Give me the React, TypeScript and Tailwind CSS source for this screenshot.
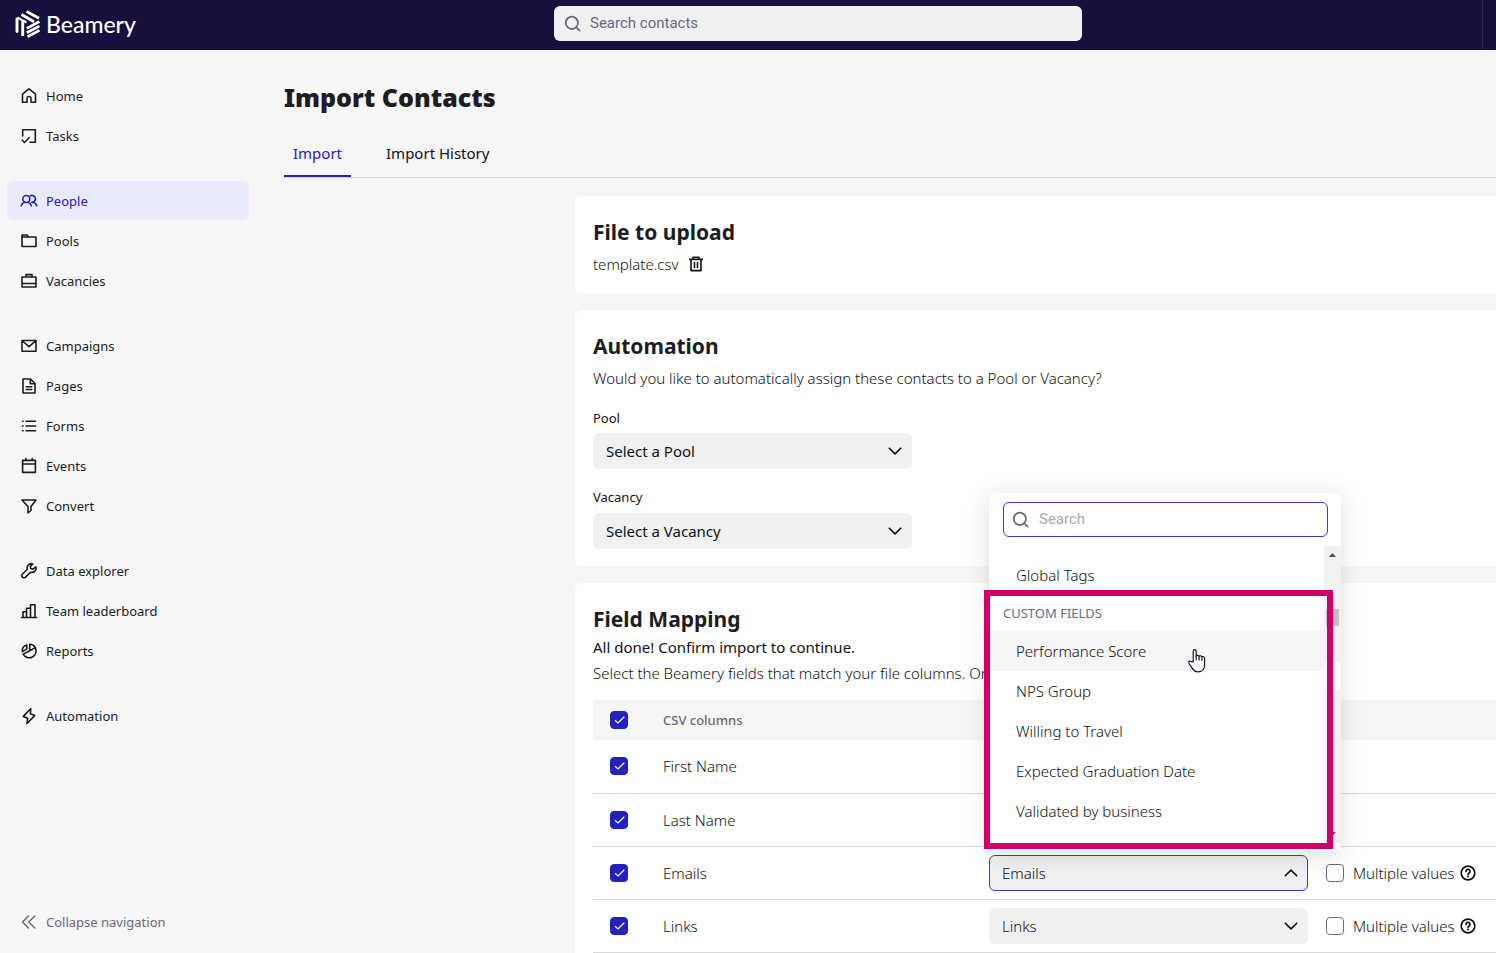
import React from "react";

type IconProps = { children: React.ReactNode };

function Icon({ children }: IconProps) {
  return (
    <svg
      viewBox="0 0 18 18"
      className="size-[18px] shrink-0"
      fill="none"
      stroke="currentColor"
      strokeWidth="1.6"
      strokeLinejoin="round"
      strokeLinecap="round"
      aria-hidden="true"
    >
      {children}
    </svg>
  );
}

type NavItem = { label: string; icon: React.ReactNode; active?: boolean };

const groups: NavItem[][] = [
  [
    {
      label: "Home",
      icon: <path d="M2.500 7.200 9 1.900l6.500 5.300v8H11v-3.700a2 2 0 0 0-4 0v3.700H2.500z" />,
    },
    {
      label: "Tasks",
      icon: <path d="M2.700 9V2.700h12.600v12.600H10M2.200 13.200l2.300 2.300 4.700-5" />,
    },
  ],
  [
    {
      label: "People",
      active: true,
      icon: (
        <>
          <circle cx="6.300" cy="7" r="3.500" />
          <path d="M1.200 13.800c.6-2.200 2-3.200 3.400-3.600M11.400 13.800c-.6-2.200-2-3.200-3.400-3.600M10.300 3.800a3.500 3.500 0 1 1 1.500 6.600M13.400 10.200c1.700.5 2.800 1.600 3.400 3.600" />
        </>
      ),
    },
    {
      label: "Pools",
      icon: <path d="M2 14.500V3h5l1.600 2H16v9.500zM2 5h6.600" />,
    },
    {
      label: "Vacancies",
      icon: <path d="M2 5h14v10H2zM6 5V2.600h6V5M2 11.500h14" />,
    },
  ],
  [
    {
      label: "Campaigns",
      icon: <path d="M2 3.500h14v10.700H2zM2.500 4 9 9.700 15.500 4" />,
    },
    {
      label: "Pages",
      icon: <path d="M3 2h7.500L15 6.500V16H3zM10.300 2v4.700H15M6.200 9.700h5.600M6.200 12.500h5.600" />,
    },
    {
      label: "Forms",
      icon: <path d="M6 4.300h9.600M6 9h9.600M6 13.700h9.600M2.500 4.300h.6M2.500 9h.6M2.500 13.700h.6" />,
    },
    {
      label: "Events",
      icon: <path d="M2.600 3.400h12.800v12H2.600zM2.600 7h12.800M5.800 1.500v2M12.200 1.500v2" />,
    },
    {
      label: "Convert",
      icon: <path d="M2 3h14l-5 6.500v4L8 16V9.500z" />,
    },
  ],
  [
    {
      label: "Data explorer",
      icon: (
        <path d="M12.700 1.900a4.200 4.200 0 0 0-5.300 5.300L2.500 12a1.950 1.950 0 0 0 2.800 3.300l5.400-5.100a4.200 4.200 0 0 0 5.200-5.300L13 7.200 10.700 6.400 10.300 4.400z" />
      ),
    },
    {
      label: "Team leaderboard",
      icon: <path d="M1.500 15.500h15M3 15.500V9.700h3.500M6.500 15.500V6.200h4M10.500 15.500V2.700h4.500v12.800" />,
    },
    {
      label: "Reports",
      icon: (
        <>
          <path d="M9.700 2.300v6.500l5.600-3.200a6.600 6.600 0 1 1-12.200 6.500L9.700 8.800M9.700 2.300a6.500 6.500 0 0 1 5.600 3.300" />
          <path d="M2.300 9.600A6.300 6.300 0 0 1 6.800 2.900v4.200z" />
        </>
      ),
    },
  ],
  [
    {
      label: "Automation",
      icon: <path d="M10.800 1.500 3.300 9.400l4.300 1.900L7 16.500l7.700-7.900-4.300-1.900z" />,
    },
  ],
];

function NavLink({ item }: { item: NavItem }) {
  return (
    <li>
      <a
        href="#"
        aria-current={item.active ? "page" : undefined}
        className={
          item.active
            ? "flex h-[39px] items-center gap-2 rounded-md bg-[#eaeafd] pl-[13px] text-[#2320c0]"
            : "flex h-[39px] items-center gap-2 rounded-md pl-[13px] text-[#1c1d22]"
        }
      >
        <Icon>{item.icon}</Icon>
        {item.label}
      </a>
    </li>
  );
}

function Logo() {
  return (
    <a href="#" className="flex items-center gap-[5px] text-white">
      <svg viewBox="0 0 26 28" className="h-7 w-[26px]" fill="none" stroke="currentColor" strokeWidth="2.9" aria-hidden="true">
        <path d="M2 9v12.500" strokeLinecap="round" />
        <path d="M7.700 11.500v14.500" />
        <path d="M11.500 1.500 24 8.300M6.500 4.600l12.500 7.200" />
        <path d="M2.500 7.500 7 10.200c1.500.9 3 1.500 4.500 2.300" strokeWidth="2.200" />
        <path d="M11.800 18.400l12.700-6.900M11.800 22.700l12.700-6.600M12.500 26.700l12-6.300" strokeWidth="2.700" />
      </svg>
      <span className="font-['Lato'] text-[23px] leading-6 font-medium">Beamery</span>
    </a>
  );
}

function SearchIcon({ className }: { className: string }) {
  return (
    <svg viewBox="0 0 18 18" className={className} fill="none" stroke="currentColor" strokeWidth="1.900" strokeLinecap="round" aria-hidden="true">
      <circle cx="8.300" cy="8.300" r="6.500" />
      <path d="m13.200 13.200 3.300 3.300" />
    </svg>
  );
}

function Chevron({ up = false }: { up?: boolean }) {
  return (
    <svg viewBox="0 0 18 18" className="size-[18px] shrink-0" fill="none" stroke="currentColor" strokeWidth="1.600" strokeLinecap="round" strokeLinejoin="round" aria-hidden="true">
      <path d={up ? "M3.300 11.800 9 6.100l5.700 5.700" : "M3.300 6.200 9 11.900l5.700-5.700"} />
    </svg>
  );
}

function Picker({ id, value, open = false, strong = false }: { id: string; value: string; open?: boolean; strong?: boolean }) {
  return (
    <button
      id={id}
      type="button"
      aria-haspopup="listbox"
      aria-expanded={open}
      className={
        open
          ? "flex h-9 w-[319px] items-center justify-between rounded-md border border-[#4a2ee8] bg-[#f0f0f3] pr-[7px] pl-3"
          : strong
            ? "flex h-9 w-[319px] items-center justify-between rounded-md bg-[#f0f0f3] pr-2 pl-[13px] font-normal"
            : "flex h-9 w-[319px] items-center justify-between rounded-md bg-[#f0f0f3] pr-2 pl-[13px]"
      }
    >
      {value}
      <Chevron up={open} />
    </button>
  );
}

function Check({ label }: { label: string }) {
  return (
    <span className="relative flex size-[18px]">
      <input
        type="checkbox"
        defaultChecked
        aria-label={label}
        className="peer size-[18px] appearance-none rounded-[4px] border border-[#6b6980] bg-white checked:border-[#2320c0] checked:bg-[#2320c0]"
      />
      <svg
        viewBox="0 0 18 18"
        className="pointer-events-none absolute inset-0 size-[18px] opacity-0 peer-checked:opacity-100"
        fill="none"
        stroke="white"
        strokeWidth="1.200"
        aria-hidden="true"
      >
        <path d="m5 9.300 3 2.600 6.300-6.200" />
      </svg>
    </span>
  );
}

function HelpIcon() {
  return (
    <svg viewBox="0 0 16 16" className="size-4" fill="none" stroke="currentColor" strokeWidth="1.700" strokeLinecap="round" aria-hidden="true">
      <circle cx="8" cy="8" r="6.800" />
      <path d="M6 6.400a2 2 0 1 1 3 1.700c-.7.400-1 .6-1 1.200" />
      <path d="M8 11.500v.1" strokeWidth="1.800" />
    </svg>
  );
}

function MultipleValues({ id }: { id: string }) {
  return (
    <div className="flex items-center">
      <input id={id} type="checkbox" className="size-[18px] appearance-none rounded-[4px] border border-[#6b6980] bg-white" />
      <label htmlFor={id} className="ml-[9px]">
        Multiple values
      </label>
      <button type="button" aria-label="Help" className="ml-[5px]">
        <HelpIcon />
      </button>
    </div>
  );
}

const customFields = ["Performance Score", "NPS Group", "Willing to Travel", "Expected Graduation Date", "Validated by business"];

function HandCursor() {
  return (
    <svg viewBox="0 0 20 26" className="absolute top-[155px] left-[198px] h-[26px] w-5" fill="white" stroke="#1b1733" strokeWidth="1.200" strokeLinejoin="round" aria-hidden="true">
      <path d="M6.200 14V3.200c0-2.200 3-2.200 3 0v5c.2-1.100 2.600-1.200 2.900.3.500-1 2.500-.8 2.800.6.700-.9 2.700-.5 2.700 1.400v6.300c0 4.500-2.600 7-6.600 7-3.200 0-4.700-1.500-6-3.900l-3-4.600c-1.100-1.800.8-3 2.100-1.700z" />
      <path d="M9.200 7.500v4.700M12.100 8.500v3.900M14.900 9.500v3.200" />
    </svg>
  );
}

function FieldMenu() {
  return (
    <div className="absolute bottom-full left-0 z-10 mb-1 w-[352px] rounded-md bg-white pt-[9px] pb-2 shadow-[0_4px_24px_rgba(0,0,0,0.14)]">
      <div className="mr-[13px] ml-[14px] flex h-[35px] items-center rounded-md border border-[#4a2ee8] pl-2 text-[#6b6980]">
        <SearchIcon className="size-[17px] shrink-0" />
        <input
          type="search"
          aria-label="Search fields"
          placeholder="Search"
          className="ml-[10px] w-full bg-transparent font-['Roboto'] text-[15px] font-normal outline-none placeholder:text-[#a9a8b3]"
        />
      </div>
      <div className="mt-[9px] flex">
        <div role="listbox" aria-label="Fields" className="h-[297px] flex-1 pt-[9px]">
          <div role="option" aria-selected="false" className="flex h-10 items-center pl-[27px]">
            Global Tags
          </div>
          <div className="flex h-9 items-center pl-[14px] text-[13px] font-normal text-[#6b6980]">CUSTOM FIELDS</div>
          {customFields.map((field, index) => (
            <div
              key={field}
              role="option"
              aria-selected={index === 0}
              className={index === 0 ? "flex h-10 items-center bg-[#f5f5f5] pl-[27px]" : "flex h-10 items-center pl-[27px]"}
            >
              {field}
            </div>
          ))}
        </div>
        <div className="flex w-[17px] flex-col items-center bg-[#f1f1f1]" aria-hidden="true">
          <svg viewBox="0 0 17 17" className="size-[17px]" fill="#505050">
            <path d="m5 11 3.500-4 3.500 4z" />
          </svg>
          <div className="mt-[46px] h-[17px] w-[13px] bg-[#c1c1c1]" />
          <div className="mt-9 h-7 w-full bg-[#fbfbfb]" />
          <svg viewBox="0 0 17 17" className="mt-auto size-[17px]" fill="#505050">
            <path d="m5 6 3.500 4 3.500-4z" />
          </svg>
        </div>
      </div>
      <div className="pointer-events-none absolute top-[97px] -left-[5px] h-[259px] w-[349px] border-6 border-[#cc0066]" />
      <HandCursor />
    </div>
  );
}

type Row = { column: string; field?: string; open?: boolean };

const rows: Row[] = [
  { column: "First Name" },
  { column: "Last Name" },
  { column: "Emails", field: "Emails", open: true },
  { column: "Links", field: "Links" },
];

function MappingTable() {
  return (
    <table className="mt-[17px] w-full table-fixed border-collapse text-left">
      <colgroup>
        <col className="w-[70px]" />
        <col className="w-[326px]" />
        <col className="w-[337px]" />
        <col />
      </colgroup>
      <thead>
        <tr className="h-10 bg-[#f5f5f5] text-[13px] text-[#6b6980]">
          <th className="pl-[17px]">
            <Check label="Select all columns" />
          </th>
          <th className="font-medium">CSV columns</th>
          <td />
          <td />
        </tr>
      </thead>
      <tbody>
        {rows.map((row) => (
          <tr key={row.column} className="h-[53px] border-b border-[#d9d9dc]">
            <td className="pl-[17px]">
              <Check label={row.column} />
            </td>
            <td>{row.column}</td>
            <td>
              {row.field && (
                <div className="relative">
                  {row.open && <FieldMenu />}
                  <Picker id={`field-${row.field}`} value={row.field} open={row.open} />
                </div>
              )}
            </td>
            <td>{row.field && <MultipleValues id={`multiple-${row.field}`} />}</td>
          </tr>
        ))}
      </tbody>
    </table>
  );
}

export default function App() {
  return (
    <div className="flex h-screen flex-col overflow-hidden bg-[#f6f6f6] font-['Noto_Sans',sans-serif] text-[15px] leading-5 font-light text-[#101116]">
      <header className="flex h-[50px] shrink-0 items-center bg-[#170f3d] pl-[15px]">
        <div className="mb-[3px] flex-1">
          <Logo />
        </div>
        <div className="mb-1 flex h-[35px] w-[528px] items-center rounded-md bg-[#f0f0f3] pl-[10px] text-[#6b6980]">
          <SearchIcon className="size-[17px] shrink-0" />
          <input
            type="search"
            aria-label="Search contacts"
            placeholder="Search contacts"
            className="ml-[9px] w-full bg-transparent font-['Roboto'] text-[15px] font-normal outline-none placeholder:text-[#6b6980]"
          />
        </div>
        <div className="mr-[13px] h-full w-[401px] border-r border-[#2c2550]" />
      </header>

      <div className="flex min-h-0 flex-1">
        <nav aria-label="Main" className="flex w-[284px] shrink-0 flex-col pt-[26px] pr-[35px] pb-3 pl-[7px] text-[13px] font-normal">
          <div className="flex flex-col gap-[26px]">
            {groups.map((group) => (
              <ul key={group[0].label} className="flex flex-col gap-px">
                {group.map((item) => (
                  <NavLink key={item.label} item={item} />
                ))}
              </ul>
            ))}
          </div>
          <button type="button" className="mt-auto flex h-[39px] items-center gap-2 pl-[13px] text-[#6b6980]">
            <Icon>
              <path d="M8.500 3 2.500 9l6 6M14.800 3l-6 6 6 6" />
            </Icon>
            Collapse navigation
          </button>
        </nav>

        <main className="min-w-0 flex-1 pt-8">
          <h1 className="text-[25px] leading-[30px] font-black text-[#1c1d22]">Import Contacts</h1>
          <div role="tablist" className="mt-[19px] flex gap-[26px] border-b border-[#d9d9dc] text-[15px] font-normal">
            <button role="tab" aria-selected="true" type="button" className="h-[46px] border-b-2 border-[#2320c0] px-[9px] text-[#2320c0]">
              Import
            </button>
            <button role="tab" aria-selected="false" type="button" className="h-[46px] border-b-2 border-transparent px-[9px]">
              Import History
            </button>
          </div>

          <div className="mt-[18px] ml-[291px] flex flex-col gap-[17px]">
            <section className="h-[97px] rounded-l-md bg-white pt-[22px] pl-[18px]">
              <h2 className="text-[21px] leading-7 font-bold text-[#1c1d22]">File to upload</h2>
              <div className="mt-2 flex items-center gap-2">
                template.csv
                <button type="button" aria-label="Remove file">
                  <Icon>
                    <path d="M2.700 4.400h12.600M4 4.400v11.200h10V4.400M6 4.400V2.200h6v2.200M7.500 7.500v5M10.500 7.500v5" />
                  </Icon>
                </button>
              </div>
            </section>

            <section className="h-[256px] rounded-l-md bg-white pt-[22px] pl-[18px]">
              <h2 className="text-[21px] leading-7 font-bold text-[#1c1d22]">Automation</h2>
              <p className="mt-2">Would you like to automatically assign these contacts to a Pool or Vacancy?</p>
              <label htmlFor="pool" className="mt-5 mb-[5px] block text-[13px] font-normal">
                Pool
              </label>
              <Picker id="pool" value="Select a Pool" strong />
              <label htmlFor="vacancy" className="mt-[18px] mb-[6px] block text-[13px] font-normal">
                Vacancy
              </label>
              <Picker id="vacancy" value="Select a Vacancy" strong />
            </section>

            <section className="rounded-l-md bg-white pt-[22px] pb-6 pl-[18px]">
              <h2 className="text-[21px] leading-7 font-bold text-[#1c1d22]">Field Mapping</h2>
              <p className="mt-1 font-normal">All done! Confirm import to continue.</p>
              <p className="mt-[6px] flex w-[749px] justify-between">
                <span>Select the Beamery fields that match your file columns. Or</span>
                <a href="#" className="text-[#3b8fc4]">
                  .
                </a>
              </p>
              <MappingTable />
            </section>
          </div>
        </main>
      </div>
    </div>
  );
}
